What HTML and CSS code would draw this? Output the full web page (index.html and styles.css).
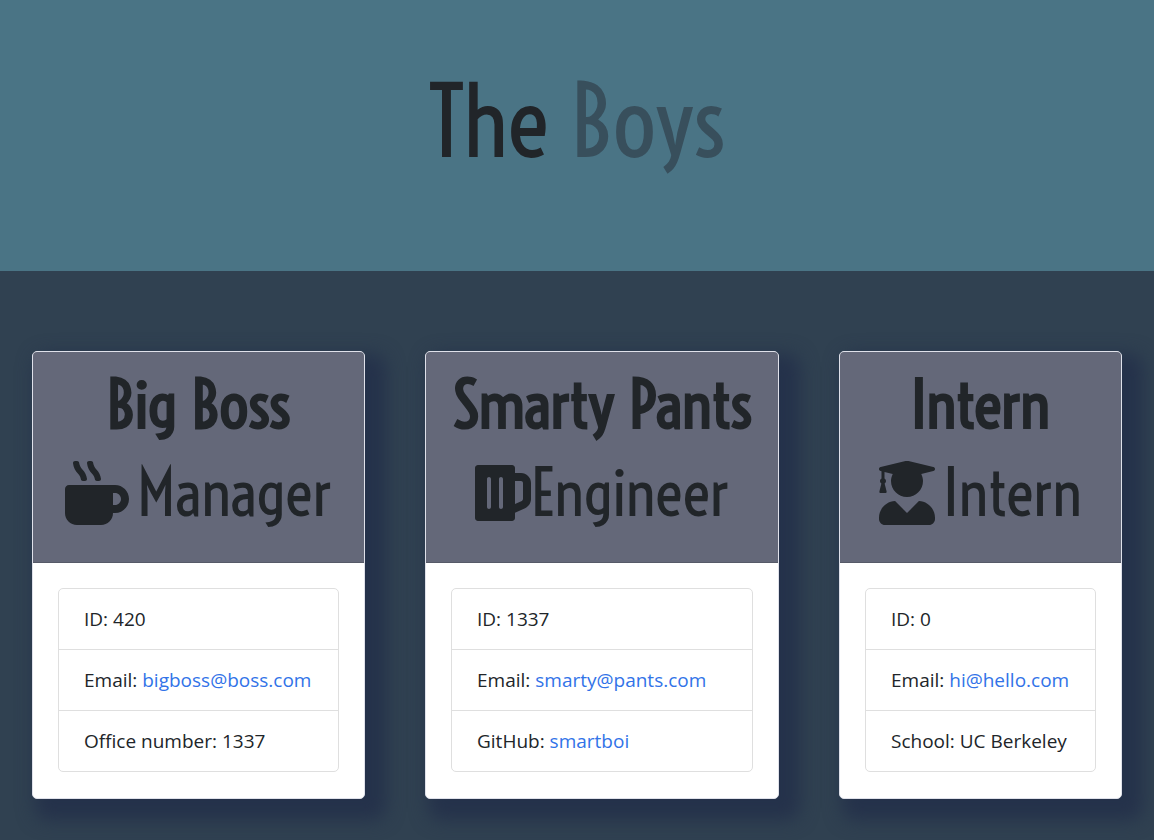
FILE: index.html
```
<!DOCTYPE html>
<html lang="en">
<head>
<meta charset="utf-8">
<meta name="viewport" content="width=device-width, initial-scale=1">
<title>The Boys</title>
<link rel="stylesheet" href="styles.css">
</head>
<body>
<header class="hero">
  <h1 class="hero-title">The <span class="hero-accent">Boys</span></h1>
</header>
<main class="team">
  <section class="card">
    <div class="card-header">
      <h2 class="name">Big Boss</h2>
      <h3 class="role role-spaced">
        <svg class="icon" viewBox="0 0 512 512" aria-hidden="true"><path d="M127.1 146.5c1.3 7.7 8 13.5 16 13.5h16.5c9.8 0 17.6-8.5 16.3-18-3.8-28.2-16.4-54.2-36.6-74.7-14.4-14.7-23.6-33.3-26.4-53.5C111.8 5.9 105 0 96.8 0H80.4C70.6 0 63 8.5 64.1 18c3.9 31.9 18 61.3 40.6 84.4 12 12.2 19.7 27.5 22.4 44.1zm112 0c1.3 7.7 8 13.5 16 13.5h16.5c9.8 0 17.6-8.5 16.3-18-3.8-28.2-16.4-54.2-36.6-74.7-14.4-14.7-23.6-33.3-26.4-53.5C223.8 5.9 217 0 208.8 0h-16.4c-9.8 0-17.5 8.5-16.3 18 3.9 31.9 18 61.3 40.6 84.4 12 12.2 19.7 27.5 22.4 44.1zM400 192H32c-17.7 0-32 14.3-32 32v192c0 53 43 96 96 96h192c53 0 96-43 96-96h16c61.8 0 112-50.2 112-112s-50.2-112-112-112zm0 160h-16v-96h16c26.5 0 48 21.5 48 48s-21.5 48-48 48z"/></svg>
        <span>Manager</span>
      </h3>
    </div>
    <div class="card-body">
      <ul class="details">
        <li class="detail">ID: 420</li>
        <li class="detail">Email: <a class="link" href="mailto:bigboss@boss.com">bigboss@boss.com</a></li>
        <li class="detail">Office number: 1337</li>
      </ul>
    </div>
  </section>
  <section class="card">
    <div class="card-header">
      <h2 class="name">Smarty Pants</h2>
      <h3 class="role">
        <svg class="icon" viewBox="0 0 448 512" aria-hidden="true"><path d="M368 96h-48V56c0-13.255-10.745-24-24-24H24C10.745 32 0 42.745 0 56v400c0 13.255 10.745 24 24 24h272c13.255 0 24-10.745 24-24v-42.11l80.606-35.977C429.396 365.063 448 336.388 448 304.86V176c0-44.112-35.888-80-80-80zm16 208.86a16.018 16.018 0 0 1-9.479 14.611L320 343.805V160h48c8.822 0 16 7.178 16 16v128.86zM208 384c-8.836 0-16-7.164-16-16V144c0-8.836 7.164-16 16-16s16 7.164 16 16v224c0 8.836-7.164 16-16 16zm-96 0c-8.836 0-16-7.164-16-16V144c0-8.836 7.164-16 16-16s16 7.164 16 16v224c0 8.836-7.164 16-16 16z"/></svg>
        <span>Engineer</span>
      </h3>
    </div>
    <div class="card-body">
      <ul class="details">
        <li class="detail">ID: 1337</li>
        <li class="detail">Email: <a class="link" href="mailto:smarty@pants.com">smarty@pants.com</a></li>
        <li class="detail">GitHub: <a class="link" href="https://github.com/smartboi">smartboi</a></li>
      </ul>
    </div>
  </section>
  <section class="card">
    <div class="card-header">
      <h2 class="name">Intern</h2>
      <h3 class="role role-spaced">
        <svg class="icon" viewBox="0 0 448 512" aria-hidden="true"><path d="M319.4 320.6L224 416l-95.4-95.4C57.1 323.7 0 382.2 0 454.4v9.6c0 26.5 21.5 48 48 48h352c26.5 0 48-21.5 48-48v-9.6c0-72.2-57.1-130.7-128.6-133.8zM13.6 79.8l6.4 1.5v58.4c-7 4.2-12 11.5-12 20.3 0 8.4 4.6 15.4 11.1 19.7L3.5 242c-1.7 6.9 2.1 14 7.6 14h41.8c5.5 0 9.3-7.1 7.6-14l-15.6-62.3C51.4 175.4 56 168.4 56 160c0-8.8-5-16.1-12-20.3V87.1l66 15.9c-8.6 17.2-14 36.4-14 57 0 70.7 57.3 128 128 128s128-57.3 128-128c0-20.6-5.3-39.8-14-57l96.3-23.2c18.2-4.4 18.2-27.1 0-31.5l-190.4-46c-13-3.1-26.7-3.1-39.7 0L13.6 48.2c-18.1 4.4-18.1 27.2 0 31.6z"/></svg>
        <span>Intern</span>
      </h3>
    </div>
    <div class="card-body">
      <ul class="details">
        <li class="detail">ID: 0</li>
        <li class="detail">Email: <a class="link" href="mailto:hi@hello.com">hi@hello.com</a></li>
        <li class="detail">School: UC Berkeley</li>
      </ul>
    </div>
  </section>
</main>
</body>
</html>
```
FILE: styles.css
```
* {
  box-sizing: border-box;
}

body {
  margin: 0;
  background: #304151;
  color: #212529;
  font-family: "Open Sans", "Noto Sans", sans-serif;
  font-size: 19px;
  line-height: 30px;
}

.hero {
  padding: 62px 32px 89px;
  background: #4a7485;
  text-align: center;
}

.hero-title,
.name,
.role {
  margin: 0;
  font-family: Voltaire, "Liberation Sans Narrow", sans-serif;
  font-weight: 400;
}

.hero-title {
  font-size: 96px;
  line-height: 120px;
}

.hero-accent {
  color: #384f5c;
}

.team {
  display: grid;
  grid-template-columns: 333fr 354fr 283fr;
  gap: 60px;
  padding: 80px 32px 41px;
}

.card {
  border: 1px solid #dfe1ea;
  border-radius: 5px;
  background: #fff;
  box-shadow: 12px 12px 18px 9px #25324b;
}

.card-header {
  padding: 9px 16px 25px;
  border-bottom: 1px solid #565a68;
  border-radius: 4px 4px 0 0;
  background: #646879;
  text-align: center;
}

.name,
.role {
  font-size: 64px;
  line-height: 88px;
  white-space: nowrap;
}

.name {
  font-weight: 700;
}

.role {
  display: flex;
  align-items: center;
  justify-content: center;
}

.role-spaced {
  gap: 8px;
}

.icon {
  flex: none;
  height: 64px;
  fill: currentColor;
}

.card-body {
  padding: 25px 25px 26px;
}

.details {
  margin: 0;
  padding: 0;
  border: 1px solid #dfdfdf;
  border-radius: 5px;
  list-style: none;
}

.detail {
  padding: 15px 25px;
  white-space: nowrap;
}

.detail + .detail {
  border-top: 1px solid #dfdfdf;
}

.link {
  color: #3273e8;
  text-decoration: none;
}
```
